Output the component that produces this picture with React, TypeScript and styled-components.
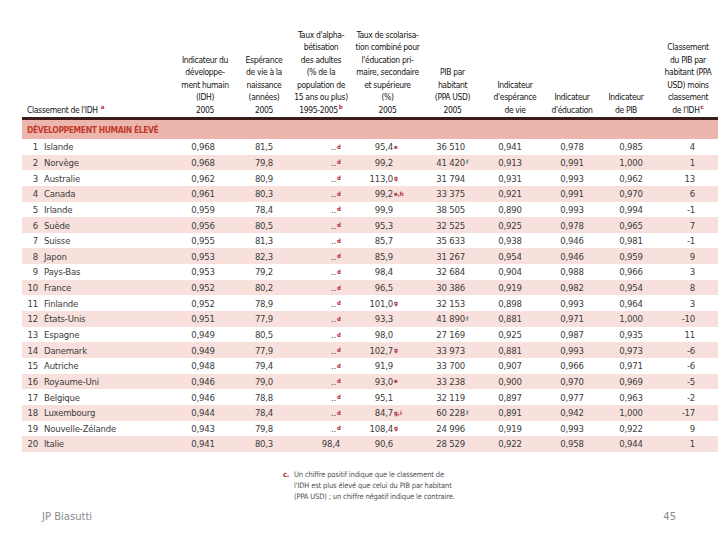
import React from "react";
import styled, { createGlobalStyle } from "styled-components";

const GlobalStyle = createGlobalStyle`
  html, body {
    margin: 0;
    padding: 0;
    background: #ffffff;
  }
  body {
    font-family: "Liberation Sans Narrow", "DejaVu Sans Condensed", "Liberation Sans", sans-serif;
  }
`;

const COLS = "152px 58px 64px 54px 75px 55px 60px 64px 54px 60px";

const Slide = styled.div`
  width: 720px;
  height: 540px;
  box-sizing: border-box;
  padding: 0 2px 0 22px;
  display: flex;
  flex-direction: column;
  overflow: hidden;
`;

const Head = styled.div`
  display: grid;
  grid-template-columns: ${COLS};
  align-items: end;
  height: 120px;
  box-sizing: border-box;
  padding-bottom: 1px;
  border-bottom: 3px solid #3a1d18;
`;

const HeadCell = styled.div<{ $align?: string; $shift?: number }>`
  display: flex;
  flex-direction: column;
  justify-content: flex-end;
  text-align: ${(p) => p.$align || "center"};
  padding-left: ${(p) => (p.$align === "left" ? "5px" : "0")};
  transform: translateX(${(p) => p.$shift || 0}px);
  font-size: 8.5px;
  letter-spacing: -0.35px;
  line-height: 12.5px;
  color: #151515;
  white-space: nowrap;
`;

const Band = styled.div`
  height: 19px;
  background: #ecb6ac;
  display: flex;
  align-items: center;
  padding-left: 5px;
  font-size: 8.5px;
  font-weight: bold;
  letter-spacing: -0.4px;
  color: #c23a2c;
`;

const Row = styled.div<{ $even: boolean }>`
  display: grid;
  grid-template-columns: ${COLS};
  align-items: center;
  height: 15.65px;
  background: ${(p) => (p.$even ? "#f8e1dc" : "#ffffff")};
  font-size: 9.5px;
  letter-spacing: -0.2px;
  color: #3c3c3c;
  white-space: nowrap;
`;

const NameCell = styled.div`
  display: flex;
  align-items: center;
`;

const Rank = styled.span`
  width: 16px;
  text-align: right;
`;

const Country = styled.span`
  margin-left: 6px;
`;

const Center = styled.div`
  text-align: center;
`;

const RightCell = styled.div`
  text-align: right;
  padding-right: 23px;
`;

const Split = styled.div`
  display: flex;
  align-items: center;
`;

const Num = styled.span<{ $w: number }>`
  width: ${(p) => p.$w}px;
  text-align: right;
`;

const Sup = styled.sup<{ $gray?: boolean }>`
  font-size: 6px;
  line-height: 0;
  margin-left: 1px;
  font-weight: bold;
  letter-spacing: 0;
  color: ${(p) => (p.$gray ? "#777777" : "#b01f3c")};
  vertical-align: 4px;
`;

const Note = styled.div`
  display: flex;
  margin: 17px 0 0 261px;
  font-size: 7.5px;
  line-height: 11px;
  letter-spacing: -0.15px;
  color: #505050;
`;

const NoteMark = styled.span`
  width: 11px;
  color: #b0262c;
  font-weight: bold;
`;

const NoteText = styled.div`
  white-space: nowrap;
`;

const Footer = styled.div`
  margin-top: auto;
  display: flex;
  justify-content: space-between;
  padding: 0 42px 18px 20px;
  font-family: "DejaVu Sans", "Liberation Sans", sans-serif;
  font-size: 10px;
  color: #8a8a8a;
`;

type Head_ = {
  lines: React.ReactNode[];
  align?: string;
  shift?: number;
};

const heads: Head_[] = [
  { lines: [<>Classement de l'IDH <Sup>a</Sup></>], align: "left" },
  { lines: ["Indicateur du", "développe-", "ment humain", "(IDH)", "2005"], shift: 2 },
  { lines: ["Espérance", "de vie à la", "naissance", "(années)", "2005"] },
  {
    lines: [
      "Taux d'alpha-",
      "bétisation",
      "des adultes",
      "(% de la",
      "population de",
      "15 ans ou plus)",
      <>1995-2005<Sup>b</Sup></>,
    ],
    shift: -2,
  },
  {
    lines: [
      "Taux de scolarisa-",
      "tion combiné pour",
      "l'éducation pri-",
      "maire, secondaire",
      "et supérieure",
      "(%)",
      "2005",
    ],
  },
  { lines: ["PIB par", "habitant", "(PPA USD)", "2005"] },
  { lines: ["Indicateur", "d'espérance", "de vie"], shift: 5 },
  { lines: ["Indicateur", "d'éducation"] },
  { lines: ["Indicateur", "de PIB"], shift: -5 },
  {
    lines: [
      "Classement",
      "du PIB par",
      "habitant (PPA",
      "USD) moins",
      "classement",
      <>de l'IDH<Sup>c</Sup></>,
    ],
  },
];

type Country_ = [
  number,
  string,
  string,
  string,
  string,
  string,
  string,
  string,
  string,
  string,
  string,
  string,
  string
];

// rank, pays, idh, esp, alpha, scol, scolNote, pib, pibNote, iEsp, iEdu, iPib, diff
const rows: Country_[] = [
  [1, "Islande", "0,968", "81,5", "", "95,4", "e", "36 510", "", "0,941", "0,978", "0,985", "4"],
  [2, "Norvège", "0,968", "79,8", "", "99,2", "", "41 420", "f", "0,913", "0,991", "1,000", "1"],
  [3, "Australie", "0,962", "80,9", "", "113,0", "g", "31 794", "", "0,931", "0,993", "0,962", "13"],
  [4, "Canada", "0,961", "80,3", "", "99,2", "e,h", "33 375", "", "0,921", "0,991", "0,970", "6"],
  [5, "Irlande", "0,959", "78,4", "", "99,9", "", "38 505", "", "0,890", "0,993", "0,994", "-1"],
  [6, "Suède", "0,956", "80,5", "", "95,3", "", "32 525", "", "0,925", "0,978", "0,965", "7"],
  [7, "Suisse", "0,955", "81,3", "", "85,7", "", "35 633", "", "0,938", "0,946", "0,981", "-1"],
  [8, "Japon", "0,953", "82,3", "", "85,9", "", "31 267", "", "0,954", "0,946", "0,959", "9"],
  [9, "Pays-Bas", "0,953", "79,2", "", "98,4", "", "32 684", "", "0,904", "0,988", "0,966", "3"],
  [10, "France", "0,952", "80,2", "", "96,5", "", "30 386", "", "0,919", "0,982", "0,954", "8"],
  [11, "Finlande", "0,952", "78,9", "", "101,0", "g", "32 153", "", "0,898", "0,993", "0,964", "3"],
  [12, "États-Unis", "0,951", "77,9", "", "93,3", "", "41 890", "f", "0,881", "0,971", "1,000", "-10"],
  [13, "Espagne", "0,949", "80,5", "", "98,0", "", "27 169", "", "0,925", "0,987", "0,935", "11"],
  [14, "Danemark", "0,949", "77,9", "", "102,7", "g", "33 973", "", "0,881", "0,993", "0,973", "-6"],
  [15, "Autriche", "0,948", "79,4", "", "91,9", "", "33 700", "", "0,907", "0,966", "0,971", "-6"],
  [16, "Royaume-Uni", "0,946", "79,0", "", "93,0", "e", "33 238", "", "0,900", "0,970", "0,969", "-5"],
  [17, "Belgique", "0,946", "78,8", "", "95,1", "", "32 119", "", "0,897", "0,977", "0,963", "-2"],
  [18, "Luxembourg", "0,944", "78,4", "", "84,7", "g,i", "60 228", "f", "0,891", "0,942", "1,000", "-17"],
  [19, "Nouvelle-Zélande", "0,943", "79,8", "", "108,4", "g", "24 996", "", "0,919", "0,993", "0,922", "9"],
  [20, "Italie", "0,941", "80,3", "98,4", "90,6", "", "28 529", "", "0,922", "0,958", "0,944", "1"],
];

const App = () => {
  return (
    <>
      <GlobalStyle />
      <Slide>
        <Head>
          {heads.map((h, i) => (
            <HeadCell key={i} $align={h.align} $shift={h.shift}>
              {h.lines.map((l, j) => (
                <span key={j}>{l}</span>
              ))}
            </HeadCell>
          ))}
        </Head>
        <Band>DÉVELOPPEMENT HUMAIN ÉLEVÉ</Band>
        {rows.map((r, i) => (
          <Row key={r[0]} $even={i % 2 === 1}>
            <NameCell>
              <Rank>{r[0]}</Rank>
              <Country>{r[1]}</Country>
            </NameCell>
            <Center>{r[2]}</Center>
            <Center>{r[3]}</Center>
            <Split>
              {r[4] ? (
                <Num $w={44}>{r[4]}</Num>
              ) : (
                <>
                  <Num $w={40}>..</Num>
                  <Sup>d</Sup>
                </>
              )}
            </Split>
            <Split>
              <Num $w={43}>{r[5]}</Num>
              {r[6] && <Sup>{r[6]}</Sup>}
            </Split>
            <Split>
              <Num $w={40}>{r[7]}</Num>
              {r[8] && <Sup $gray>{r[8]}</Sup>}
            </Split>
            <Center>{r[9]}</Center>
            <Center>{r[10]}</Center>
            <Center>{r[11]}</Center>
            <RightCell>{r[12]}</RightCell>
          </Row>
        ))}
        <Note>
          <NoteMark>c.</NoteMark>
          <NoteText>
            Un chiffre positif indique que le classement de
            <br />
            l'IDH est plus élevé que celui du PIB par habitant
            <br />
            (PPA USD) ; un chiffre négatif indique le contraire.
          </NoteText>
        </Note>
        <Footer>
          <span>JP Biasutti</span>
          <span>45</span>
        </Footer>
      </Slide>
    </>
  );
};

export default App;
